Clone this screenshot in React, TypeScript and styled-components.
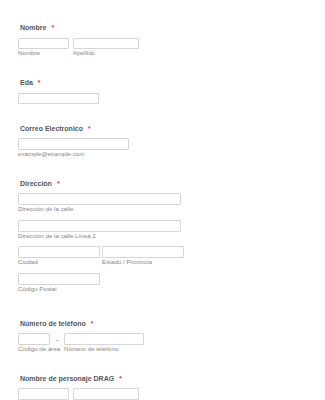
import React from "react";
import styled, { createGlobalStyle } from "styled-components";

const Global = createGlobalStyle`
  html, body { margin: 0; padding: 0; background: #ffffff; }
  body { font-family: "Liberation Sans", Arial, sans-serif; }
`;

const Form = styled.div`
  width: 325px;
  height: 400px;
  overflow: hidden;
  box-sizing: border-box;
  padding: 23px 0 0 18px;
  display: flex;
  flex-direction: column;
`;

const Section = styled.div<{ $after?: number }>`
  display: flex;
  flex-direction: column;
  margin-bottom: ${(p) => p.$after ?? 21}px;
`;

const Label = styled.div<{ $gap?: number }>`
  font-size: 7px;
  line-height: 9px;
  font-weight: 700;
  color: #555555;
  padding-left: 2px;
  margin-bottom: ${(p) => p.$gap ?? 5}px;
  white-space: nowrap;
`;

const Star = styled.span`
  color: #f23a3c;
  margin-left: 5px;
`;

const Row = styled.div<{ $gap?: number; $after?: number }>`
  display: flex;
  align-items: flex-start;
  gap: ${(p) => p.$gap ?? 4}px;
  margin-bottom: ${(p) => p.$after ?? 0}px;
`;

const Field = styled.div<{ $w: number }>`
  display: flex;
  flex-direction: column;
  width: ${(p) => p.$w}px;
`;

const Input = styled.div<{ $h?: number }>`
  box-sizing: border-box;
  height: ${(p) => p.$h ?? 12}px;
  border: 1px solid #d6d6d6;
  background: #ffffff;
  border-radius: 1px;
`;

const Sub = styled.div`
  font-size: 6.2px;
  line-height: 8px;
  color: #858585;
  white-space: nowrap;
`;

const Dash = styled.div`
  width: 10px;
  height: 12px;
  display: flex;
  align-items: center;
  justify-content: center;
  font-size: 7px;
  color: #888888;
`;

export default function App() {
  return (
    <>
      <Global />
      <Form>
        <Section>
          <Label $gap={6}>
            Nombre<Star>*</Star>
          </Label>
          <Row $gap={4}>
            <Field $w={51}>
              <Input $h={11} />
              <Sub>Nombre</Sub>
            </Field>
            <Field $w={66}>
              <Input $h={11} />
              <Sub>Apellido</Sub>
            </Field>
          </Row>
        </Section>

        <Section $after={20}>
          <Label $gap={6}>
            Eda<Star>*</Star>
          </Label>
          <Field $w={81}>
            <Input $h={11} />
          </Field>
        </Section>

        <Section>
          <Label>
            Correo Electronico<Star>*</Star>
          </Label>
          <Field $w={111}>
            <Input />
            <Sub>example@example.com</Sub>
          </Field>
        </Section>

        <Section $after={26}>
          <Label>
            Dirección<Star>*</Star>
          </Label>
          <Row $after={7}>
            <Field $w={163}>
              <Input />
              <Sub>Dirección de la calle</Sub>
            </Field>
          </Row>
          <Row $after={6}>
            <Field $w={163}>
              <Input />
              <Sub>Dirección de la calle Línea 2</Sub>
            </Field>
          </Row>
          <Row $gap={2} $after={7}>
            <Field $w={82}>
              <Input />
              <Sub>Ciudad</Sub>
            </Field>
            <Field $w={82}>
              <Input />
              <Sub>Estado / Provincia</Sub>
            </Field>
          </Row>
          <Row>
            <Field $w={82}>
              <Input />
              <Sub>Código Postal</Sub>
            </Field>
          </Row>
        </Section>

        <Section>
          <Label>
            Número de teléfono<Star>*</Star>
          </Label>
          <Row $gap={2}>
            <Field $w={32}>
              <Input />
              <Sub>Código de área</Sub>
            </Field>
            <Dash>-</Dash>
            <Field $w={80}>
              <Input />
              <Sub>Número de teléfono</Sub>
            </Field>
          </Row>
        </Section>

        <Section>
          <Label>
            Nombre de personaje DRAG<Star>*</Star>
          </Label>
          <Row $gap={4}>
            <Field $w={51}>
              <Input />
            </Field>
            <Field $w={66}>
              <Input />
            </Field>
          </Row>
        </Section>
      </Form>
    </>
  );
}
